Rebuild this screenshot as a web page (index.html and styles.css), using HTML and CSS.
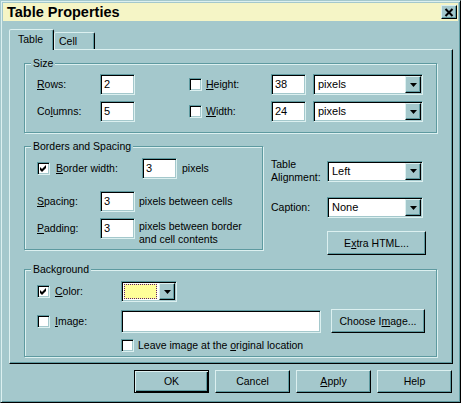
FILE: index.html
```html
<!DOCTYPE html>
<html>
<head>
<meta charset="utf-8">
<link rel="stylesheet" href="styles.css">
</head>
<body>
<div class="window">
  <div class="titlebar">
    <span class="title">Table Properties</span>
    <span class="close"><svg width="10" height="9" viewBox="0 0 10 9"><path d="M1.5 1 L8.5 8 M8.5 1 L1.5 8" stroke="#000" stroke-width="2" fill="none"/></svg></span>
  </div>
  <div class="client">
    <div class="tabs">
      <div class="tab active">Table</div>
      <div class="tab">Cell</div>
    </div>
    <div class="panel">
      <div class="group size">
        <span class="legend">Size</span>
        <div class="row">
          <span class="lbl"><u>R</u>ows:</span>
          <span class="field w35">2</span>
          <span class="check ml54"></span>
          <span class="cklbl w65"><u>H</u>eight:</span>
          <span class="field w35">38</span>
          <span class="select w110 ml7"><span class="val">pixels</span><span class="arrow"><svg width="7" height="4" viewBox="0 0 7 4"><polygon points="0,0 7,0 3.5,4" fill="#000"/></svg></span></span>
        </div>
        <div class="row gap6">
          <span class="lbl">Co<u>l</u>umns:</span>
          <span class="field w35">5</span>
          <span class="check ml54"></span>
          <span class="cklbl w65"><u>W</u>idth:</span>
          <span class="field w35">24</span>
          <span class="select w110 ml7"><span class="val">pixels</span><span class="arrow"><svg width="7" height="4" viewBox="0 0 7 4"><polygon points="0,0 7,0 3.5,4" fill="#000"/></svg></span></span>
        </div>
      </div>
      <div class="middle">
        <div class="group borders">
          <span class="legend">Borders and Spacing</span>
          <div class="row">
            <span class="check"><svg width="9" height="9" viewBox="0 0 9 9"><polygon points="1,3 3,5 7,1 7,4 3,8 1,6" fill="#000"/></svg></span>
            <span class="cklbl bw"><u>B</u>order width:</span>
            <span class="field w35">3</span>
            <span class="after5">pixels</span>
          </div>
          <div class="row gap12">
            <span class="lbl"><u>S</u>pacing:</span>
            <span class="field w35">3</span>
            <span class="after4">pixels between cells</span>
          </div>
          <div class="row top gap6">
            <span class="lbl lblpad"><u>P</u>adding:</span>
            <span class="field w35">3</span>
            <span class="after4 two">pixels between border<br>and cell contents</span>
          </div>
        </div>
        <div class="side">
          <div class="row srow1">
            <span class="slbl">Table<br>Alignment:</span>
            <span class="select w96"><span class="val">Left</span><span class="arrow"><svg width="7" height="4" viewBox="0 0 7 4"><polygon points="0,0 7,0 3.5,4" fill="#000"/></svg></span></span>
          </div>
          <div class="row srow2">
            <span class="slbl">Caption:</span>
            <span class="select w96"><span class="val">None</span><span class="arrow"><svg width="7" height="4" viewBox="0 0 7 4"><polygon points="0,0 7,0 3.5,4" fill="#000"/></svg></span></span>
          </div>
          <div class="btn extra">E<u>x</u>tra HTML...</div>
        </div>
      </div>
      <div class="group background">
        <span class="legend">Background</span>
        <div class="row">
          <span class="check"><svg width="9" height="9" viewBox="0 0 9 9"><polygon points="1,3 3,5 7,1 7,4 3,8 1,6" fill="#000"/></svg></span>
          <span class="cklbl blbl"><u>C</u>olor:</span>
          <span class="select picker"><span class="swatch"></span><span class="arrow"><svg width="7" height="4" viewBox="0 0 7 4"><polygon points="0,0 7,0 3.5,4" fill="#000"/></svg></span></span>
        </div>
        <div class="row gap7">
          <span class="check"></span>
          <span class="cklbl blbl"><u>I</u>mage:</span>
          <span class="field w200"></span>
          <div class="btn choose">Choose I<u>m</u>age...</div>
        </div>
        <div class="row gap6 leave">
          <span class="check"></span>
          <span class="cklbl ml6">Leave image at the <u>o</u>riginal location</span>
        </div>
      </div>
    </div>
    <div class="buttons">
      <div class="btn dlg default">OK</div>
      <div class="btn dlg">Cancel</div>
      <div class="btn dlg"><u>A</u>pply</div>
      <div class="btn dlg">Help</div>
    </div>
  </div>
</div>
</body>
</html>
```
FILE: styles.css
```css
:root {
  --bg: #a4c8cc;
  --hi: #dcf0f0;
  --sh: #5e9aa0;
}
* { box-sizing: border-box; }
html, body { margin: 0; background: #fff; }
body {
  font-family: "Liberation Sans", Arial, sans-serif;
  font-size: 10.5px;
  line-height: 13px;
  color: #000;
}
u { text-decoration: underline; text-underline-offset: 1px; }

.window {
  width: 461px;
  height: 403px;
  background: var(--bg);
  border: 1px solid;
  border-color: var(--bg) #000 #000 var(--bg);
  box-shadow: inset 1px 1px 0 var(--hi), inset -1px -1px 0 var(--sh);
  padding: 2px;
}
.titlebar {
  height: 18px;
  background: #f5f5c6;
  display: flex;
  align-items: center;
  justify-content: space-between;
  padding: 0 1px 0 4px;
}
.title {
  font-weight: bold;
  font-size: 14.5px;
  line-height: 18px;
}
.close {
  width: 16px;
  height: 14px;
  border: 1px solid;
  border-color: var(--hi) #000 #000 var(--hi);
  box-shadow: inset -1px -1px 0 var(--sh);
  display: flex;
  align-items: center;
  justify-content: center;
  background: var(--bg);
}
.client { padding: 8px 0 0 6px; }

.tabs {
  display: flex;
  align-items: flex-end;
  height: 20px;
}
.tab {
  width: 41px;
  height: 17px;
  border: 1px solid;
  border-bottom: none;
  border-color: var(--hi) #000 transparent var(--hi);
  box-shadow: inset -1px 0 0 var(--sh);
  border-radius: 2px 2px 0 0;
  padding-left: 4px;
  line-height: 16px;
  background: var(--bg);
}
.tab.active {
  width: 45px;
  height: 21px;
  margin-bottom: -1px;
  position: relative;
  z-index: 1;
  padding-left: 8px;
  line-height: 19px;
}

.panel {
  width: 444px;
  height: 315px;
  border: 1px solid;
  border-color: var(--hi) #000 #000 var(--hi);
  box-shadow: inset -1px -1px 0 var(--sh);
  padding: 13px 0 0 14px;
}
.group {
  position: relative;
  border: 1px solid var(--sh);
  box-shadow: 1px 1px 0 var(--hi), inset 1px 1px 0 var(--hi);
}
.legend {
  position: absolute;
  top: -7px;
  left: 6px;
  padding: 0 2px;
  background: var(--bg);
  line-height: 13px;
}
.size { width: 413px; height: 70px; padding: 10px 0 0 12px; }
.middle { display: flex; margin-top: 13px; }
.borders { width: 239px; height: 104px; padding: 11px 0 0 12px; }
.background { width: 413px; height: 88px; margin-top: 14px; padding: 11px 0 0 12px; }

.row { display: flex; align-items: center; }
.row.top { align-items: flex-start; }
.gap6 { margin-top: 6px; }
.gap7 { margin-top: 7px; }
.gap12 { margin-top: 12px; }
.lbl { width: 63px; }
.lblpad { padding-top: 4px; }
.w35 { width: 35px; }
.w65 { width: 65px; }
.w96 { width: 96px; }
.w110 { width: 110px; }
.w200 { width: 200px; height: 23px !important; }
.ml54 { margin-left: 54px; }
.ml7 { margin-left: 7px; }
.ml6 { margin-left: 6px; }
.cklbl { margin-left: 4px; }
.bw { margin-left: 6px; width: 86px; }
.blbl { margin-left: 5px; width: 66px; }
.after5 { margin-left: 5px; }
.after4 { margin-left: 4px; }
.two { margin-top: 2px; }

.field {
  height: 21px;
  background: #fff;
  border: 1px solid;
  border-color: var(--sh) var(--hi) var(--hi) var(--sh);
  box-shadow: inset 1px 1px 0 #000, inset -1px -1px 0 var(--bg);
  padding: 1px 0 0 3px;
  line-height: 17px;
  font-size: 11px;
}
.check {
  width: 13px;
  height: 13px;
  flex: none;
  background: #fff;
  border: 1px solid;
  border-color: var(--sh) var(--hi) var(--hi) var(--sh);
  box-shadow: inset 1px 1px 0 #000, inset -1px -1px 0 var(--bg);
  padding: 1px;
  display: flex;
}
.select {
  height: 21px;
  display: flex;
  background: #fff;
  border: 1px solid;
  border-color: var(--sh) var(--hi) var(--hi) var(--sh);
  box-shadow: inset 1px 1px 0 #000, inset -1px -1px 0 var(--bg);
  padding: 1px;
}
.select .val { flex: 1; padding: 1px 0 0 3px; line-height: 15px; font-size: 11px; }
.arrow {
  width: 16px;
  height: 17px;
  flex: none;
  background: var(--bg);
  border: 1px solid;
  border-color: var(--hi) #000 #000 var(--hi);
  box-shadow: inset -1px -1px 0 var(--sh);
  display: flex;
  align-items: center;
  justify-content: center;
}
.picker { width: 56px; }
.swatch {
  flex: 1;
  background: #ffff99;
  border: 1px dotted #602070;
  margin: 1px 2px 1px 1px;
}

.side { margin-left: 8px; }
.srow1 { margin-top: 12px; }
.srow2 { margin-top: 13px; }
.slbl { width: 56px; }
.btn {
  background: var(--bg);
  border: 1px solid;
  border-color: var(--hi) #000 #000 var(--hi);
  box-shadow: inset -1px -1px 0 var(--sh);
  display: flex;
  align-items: center;
  justify-content: center;
}
.extra { width: 99px; height: 24px; margin: 13px 0 0 56px; }
.choose { width: 94px; height: 24px; margin-left: 10px; }
.leave { margin-left: 84px; }

.buttons {
  width: 443px;
  display: flex;
  justify-content: flex-end;
  gap: 6px;
  margin-top: 6px;
}
.dlg { width: 75px; height: 23px; }
.default {
  border-color: #000;
  box-shadow: inset 1px 1px 0 var(--hi), inset -1px -1px 0 #000, inset -2px -2px 0 var(--sh);
}
```
